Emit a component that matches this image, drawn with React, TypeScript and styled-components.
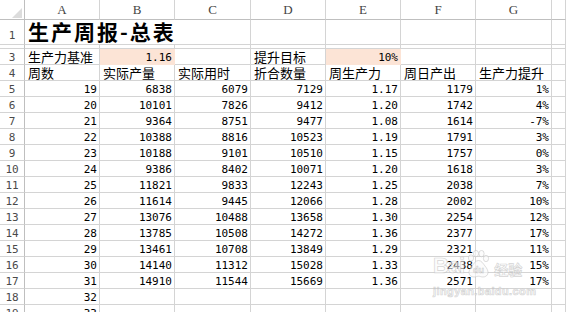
import React from "react";
import styled, { createGlobalStyle } from "styled-components";

const GlobalStyle = createGlobalStyle`
  html, body {
    margin: 0;
    padding: 0;
    background: #ffffff;
    overflow: hidden;
  }
`;

const COLS = "25px 75px 75px 76px 75px 75px 75px 76px 1fr";
const GRID = "#d4d4d4";
const HEAD_LINE = "#bfbfbf";
const FILL = "#fce4d6";

const Sheet = styled.div`
  position: relative;
  width: 566px;
  height: 312px;
  overflow: hidden;
  background: #fff;
`;

const Row = styled.div<{ $h: number }>`
  display: grid;
  grid-template-columns: ${COLS};
  height: ${(p) => p.$h}px;
`;

const Corner = styled.div`
  position: relative;
  box-sizing: border-box;
  border-right: 1px solid ${HEAD_LINE};
  border-bottom: 1px solid ${HEAD_LINE};

  svg {
    position: absolute;
    right: 2px;
    bottom: 1px;
  }
`;

const ColHead = styled.div`
  box-sizing: border-box;
  border-right: 1px solid ${GRID};
  border-bottom: 1px solid ${HEAD_LINE};
  text-align: center;
  font-family: "Liberation Serif", serif;
  font-size: 13px;
  line-height: 16px;
  padding-top: 2px;
  color: #444;
`;

const RowHead = styled.div<{ $top?: number }>`
  box-sizing: border-box;
  border-right: 1px solid ${HEAD_LINE};
  border-bottom: 1px solid ${GRID};
  text-align: center;
  font-family: "DejaVu Sans Mono", monospace;
  font-size: 11px;
  line-height: 12px;
  padding-top: ${(p) => p.$top ?? 3}px;
  color: #4a4a4a;
  overflow: hidden;
`;

const Cell = styled.div<{ $num?: boolean; $fill?: boolean }>`
  box-sizing: border-box;
  border-right: 1px solid ${(p) => (p.$fill ? FILL : GRID)};
  border-bottom: 1px solid ${(p) => (p.$fill ? FILL : GRID)};
  background: ${(p) => (p.$fill ? FILL : "transparent")};
  padding: ${(p) => (p.$num ? "3px 2px 0 3px" : "0 2px 0 3px")};
  text-align: ${(p) => (p.$num ? "right" : "left")};
  white-space: nowrap;
  overflow: visible;
  color: #000;
  font-family: ${(p) =>
    p.$num
      ? '"DejaVu Sans Mono", monospace'
      : '"Noto Sans CJK SC", sans-serif'};
  font-size: ${(p) => (p.$num ? "11px" : "13px")};
  line-height: ${(p) => (p.$num ? "12px" : "15px")};
`;

const TitleCell = styled.div`
  grid-column: span 3;
  box-sizing: border-box;
  border-right: 1px solid ${GRID};
  border-bottom: 1px solid ${GRID};
  padding-left: 3px;
  font-family: "Noto Sans CJK SC", sans-serif;
  font-weight: 700;
  font-size: 21px;
  letter-spacing: 2px;
  line-height: 22px;
  color: #000;
  white-space: nowrap;
`;

const Watermark = styled.div`
  position: absolute;
  left: 433px;
  top: 246px;
  width: 110px;
  pointer-events: none;
  color: rgba(250, 250, 250, 0.6);
  -webkit-text-stroke: 0.7px rgba(185, 185, 185, 0.6);
`;

const MarkTop = styled.div`
  display: flex;
  align-items: flex-end;
  gap: 2px;
  height: 32px;
`;

const MarkBai = styled.span`
  font-family: "Liberation Sans", sans-serif;
  font-weight: 700;
  font-size: 22px;
  line-height: 24px;
  letter-spacing: -1px;
`;

const MarkJy = styled.span`
  font-family: "Noto Sans CJK SC", sans-serif;
  font-weight: 700;
  font-size: 14px;
  line-height: 18px;
  margin-left: 2px;
`;

const MarkUrl = styled.div`
  font-family: "Liberation Sans", sans-serif;
  font-weight: 700;
  font-size: 11px;
  line-height: 14px;
  margin-top: 6px;
  letter-spacing: 0.4px;
`;

const heads = ["A", "B", "C", "D", "E", "F", "G", ""];

const rows: (string | number)[][] = [
  [19, 6838, 6079, 7129, "1.17", 1179, "1%"],
  [20, 10101, 7826, 9412, "1.20", 1742, "4%"],
  [21, 9364, 8751, 9477, "1.08", 1614, "-7%"],
  [22, 10388, 8816, 10523, "1.19", 1791, "3%"],
  [23, 10188, 9101, 10510, "1.15", 1757, "0%"],
  [24, 9386, 8402, 10071, "1.20", 1618, "3%"],
  [25, 11821, 9833, 12243, "1.25", 2038, "7%"],
  [26, 11614, 9445, 12066, "1.28", 2002, "10%"],
  [27, 13076, 10488, 13658, "1.30", 2254, "12%"],
  [28, 13785, 10508, 14272, "1.36", 2377, "17%"],
  [29, 13461, 10708, 13849, "1.29", 2321, "11%"],
  [30, 14140, 11312, 15028, "1.33", 2438, "15%"],
  [31, 14910, 11544, 15669, "1.36", 2571, "17%"],
  [32, "", "", "", "", "", ""],
  [33, "", "", "", "", "", ""],
];

const labels = ["周数", "实际产量", "实际用时", "折合数量", "周生产力", "周日产出", "生产力提升"];

const Paw = () => (
  <svg width="24" height="28" viewBox="0 0 24 28">
    <g fill="rgba(250,250,250,0.6)" stroke="rgba(185,185,185,0.6)" strokeWidth="0.8">
      <ellipse cx="5" cy="8" rx="2.6" ry="3.2" />
      <ellipse cx="10" cy="3.6" rx="2.6" ry="3.2" />
      <ellipse cx="15.5" cy="3.6" rx="2.6" ry="3.2" />
      <ellipse cx="20" cy="8.5" rx="2.6" ry="3.2" />
      <path d="M12.5 10.5c-3 0-4.5 3-6.5 5.5-2 2.5-3 4.5-3 6.5 0 3 2.5 4.5 5 4.5 2 0 3-0.8 4.5-0.8s2.5 0.8 4.5 0.8c2.5 0 5-1.5 5-4.5 0-2-1-4-3-6.5-2-2.5-3.5-5.5-6.5-5.5z" />
    </g>
    <text
      x="12.5"
      y="23"
      textAnchor="middle"
      fontFamily="Liberation Sans, sans-serif"
      fontWeight="700"
      fontSize="9"
      fill="rgba(250,250,250,0.8)"
      stroke="rgba(175,175,175,0.7)"
      strokeWidth="0.5"
    >
      du
    </text>
  </svg>
);

export default function App() {
  return (
    <>
      <GlobalStyle />
      <Sheet>
        <Row $h={20}>
          <Corner>
            <svg width="10" height="10" viewBox="0 0 10 10">
              <polygon points="10,0 10,10 0,10" fill="#dcdcdc" />
            </svg>
          </Corner>
          {heads.map((h, i) => (
            <ColHead key={i}>{h}</ColHead>
          ))}
        </Row>

        <Row $h={25}>
          <RowHead $top={10}>1</RowHead>
          <TitleCell>生产周报-总表</TitleCell>
          {[0, 1, 2, 3, 4].map((i) => (
            <Cell key={i} />
          ))}
        </Row>

        <Row $h={4}>
          <RowHead $top={0} />
          {[0, 1, 2, 3, 4, 5, 6, 7].map((i) => (
            <Cell key={i} />
          ))}
        </Row>

        <Row $h={16}>
          <RowHead>3</RowHead>
          <Cell>生产力基准</Cell>
          <Cell $num $fill>1.16</Cell>
          <Cell />
          <Cell>提升目标</Cell>
          <Cell $num $fill>10%</Cell>
          <Cell />
          <Cell />
          <Cell />
        </Row>

        <Row $h={16}>
          <RowHead>4</RowHead>
          {labels.map((l) => (
            <Cell key={l}>{l}</Cell>
          ))}
          <Cell />
        </Row>

        {rows.map((r, i) => (
          <Row $h={16} key={i}>
            <RowHead>{i + 5}</RowHead>
            {r.map((v, j) => (
              <Cell $num key={j}>
                {v}
              </Cell>
            ))}
            <Cell />
          </Row>
        ))}

        <Watermark>
          <MarkTop>
            <MarkBai>Bai</MarkBai>
            <Paw />
            <MarkJy>经验</MarkJy>
          </MarkTop>
          <MarkUrl>jingyan.baidu.com</MarkUrl>
        </Watermark>
      </Sheet>
    </>
  );
}
